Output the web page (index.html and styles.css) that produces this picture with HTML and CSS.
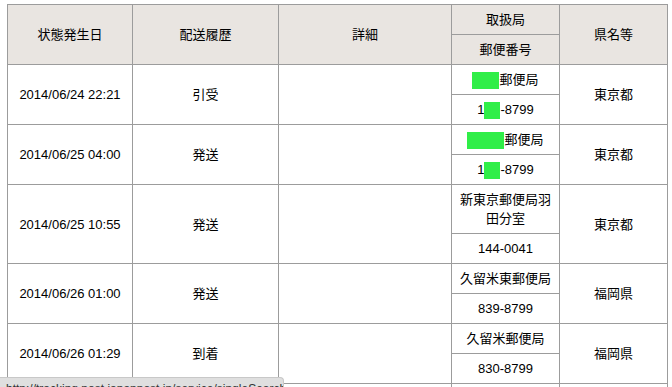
FILE: index.html
```html
<!DOCTYPE html>
<html lang="ja">
<head>
<meta charset="utf-8">
<title>配送履歴</title>
<link rel="stylesheet" href="styles.css">
</head>
<body>
<div class="page">
  <table class="track">
    <colgroup>
      <col class="c-date"><col class="c-status"><col class="c-detail"><col class="c-office"><col class="c-pref">
    </colgroup>
    <thead>
      <tr><th rowspan="2">状態発生日</th><th rowspan="2">配送履歴</th><th rowspan="2">詳細</th><th>取扱局</th><th rowspan="2">県名等</th></tr>
      <tr><th>郵便番号</th></tr>
    </thead>
    <tbody>
      <tr><td rowspan="2">2014/06/24 22:21</td><td rowspan="2">引受</td><td rowspan="2"></td><td><span class="mask m-office1"></span>郵便局</td><td rowspan="2">東京都</td></tr>
      <tr><td>1<span class="mask m-zip"></span>-8799</td></tr>
      <tr><td rowspan="2">2014/06/25 04:00</td><td rowspan="2">発送</td><td rowspan="2"></td><td><span class="mask m-office2"></span>郵便局</td><td rowspan="2">東京都</td></tr>
      <tr><td>1<span class="mask m-zip"></span>-8799</td></tr>
      <tr><td rowspan="2">2014/06/25 10:55</td><td rowspan="2">発送</td><td rowspan="2"></td><td>新東京郵便局羽田分室</td><td rowspan="2">東京都</td></tr>
      <tr><td>144-0041</td></tr>
      <tr><td rowspan="2">2014/06/26 01:00</td><td rowspan="2">発送</td><td rowspan="2"></td><td>久留米東郵便局</td><td rowspan="2">福岡県</td></tr>
      <tr><td>839-8799</td></tr>
      <tr><td rowspan="2">2014/06/26 01:29</td><td rowspan="2">到着</td><td rowspan="2"></td><td>久留米郵便局</td><td rowspan="2">福岡県</td></tr>
      <tr><td>830-8799</td></tr>
      <tr class="next"><td rowspan="2"></td><td rowspan="2"></td><td rowspan="2"></td><td></td><td rowspan="2"></td></tr>
      <tr class="next"><td></td></tr>
    </tbody>
  </table>
</div>
<div class="status">http://tracking.post.japanpost.jp/service/singleSearch.do?searchKind=S002&amp;locale=ja</div>
</body>
</html>
```
FILE: styles.css
```css
html, body {
  margin: 0;
  padding: 0;
  background: #fff;
}
body {
  font-family: "Liberation Sans", "Noto Sans CJK JP", sans-serif;
  font-size: 13px;
  color: #000;
  overflow: hidden;
  height: 387px;
  position: relative;
}
.page {
  padding: 4px 0 0 7px;
}
.track {
  border-collapse: collapse;
  table-layout: fixed;
  width: 660px;
}
.c-date { width: 125px; }
.c-status { width: 146px; }
.c-detail { width: 173px; }
.c-office { width: 108px; }
.c-pref { width: 108px; }
.track th,
.track td {
  border: 1px solid #9c9c9c;
  padding: 5px 4px;
  line-height: 19px;
  text-align: center;
  vertical-align: middle;
  font-weight: normal;
}
.track .next td {
  height: 19px;
}
.track th {
  background: #e9e5e1;
}
.mask {
  display: inline-block;
  background: #30ee48;
  vertical-align: middle;
}
.m-office1 { width: 27px; height: 17px; }
.m-office2 { width: 37px; height: 17px; }
.m-zip { width: 16px; height: 17px; }
.status {
  position: absolute;
  left: 0;
  top: 377px;
  width: 284px;
  height: 20px;
  background: #dfdfdf;
  border-top: 1px solid #c8c8c8;
  border-right: 1px solid #c8c8c8;
  border-top-right-radius: 4px;
  box-sizing: border-box;
  font-family: "Liberation Sans", sans-serif;
  font-size: 12px;
  line-height: 14px;
  padding: 4px 0 0 6px;
  color: #333;
  white-space: nowrap;
  overflow: hidden;
}
```
